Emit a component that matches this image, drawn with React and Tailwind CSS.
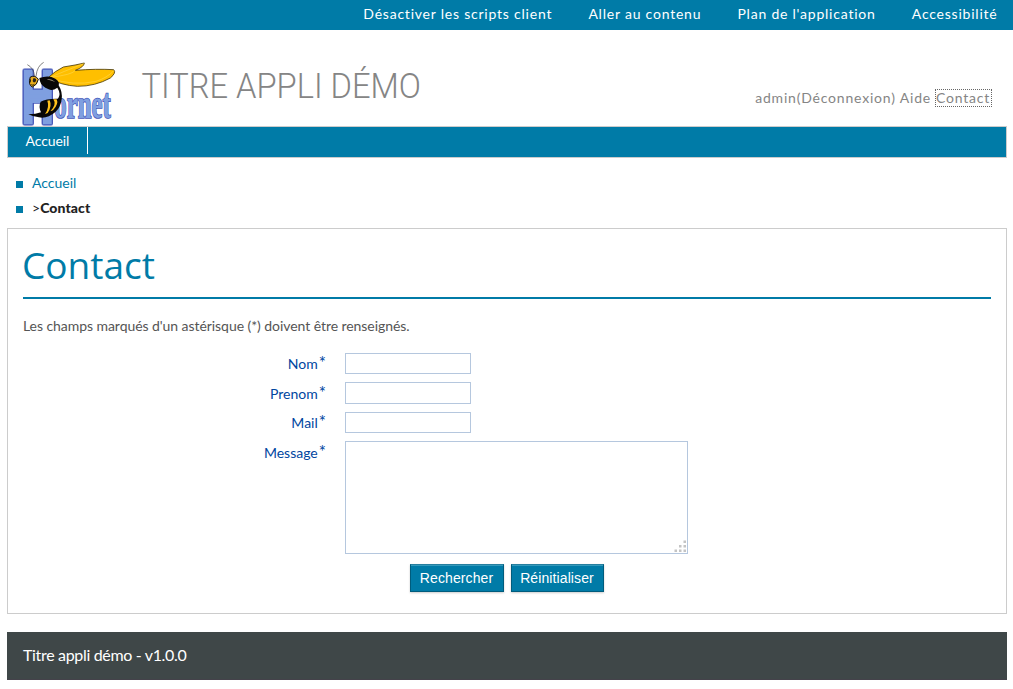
const topLinks = ["Désactiver les scripts client", "Aller au contenu", "Plan de l'application", "Accessibilité"];

function HornetLogo() {
  return (
    <svg className="block h-[67px] w-[96px] shrink-0 overflow-visible" viewBox="66 30 288 201" role="img" aria-label="Hornet">
      <g className="[filter:drop-shadow(2px_0_0_#4455b8)_drop-shadow(-2px_0_0_#4455b8)_drop-shadow(0_2px_0_#4455b8)_drop-shadow(0_-2px_0_#4455b8)]">
        <text transform="translate(67 217) scale(1 1.7)" fontSize="129" fontWeight="bold" fontFamily="Liberation Sans, sans-serif" fill="#7f9fe0" stroke="#7f9fe0" strokeWidth="8">H</text>
      </g>
      <text transform="translate(163 205) scale(1 1.95)" fontSize="66" fontWeight="bold" fontFamily="Liberation Serif, serif" fill="#7f9fe0" stroke="#4455b8" strokeWidth="2.6" paintOrder="stroke" textLength="169" lengthAdjust="spacingAndGlyphs">ornet</text>
      <path d="M104 80Q101 53 82 44M108 79Q111 48 131 37" fill="none" stroke="#444" strokeWidth="2" />
      <path d="M143 84Q165 63 190 51Q229 45 253 39Q252 51 226 61Q290 56 341 59Q350 68 331 84Q286 109 232 109Q184 106 143 84Z" fill="#ffbf00" stroke="#4b3b08" strokeWidth="2.5" />
      <path d="M151 82Q187 66 251 41M151 82Q218 74 226 61M151 85Q220 109 288 94Q321 84 341 62" fill="none" stroke="#ffdf60" strokeWidth="1.5" />
      <path d="M118 84Q146 74 166 86Q180 95 176 106Q188 126 185 148Q181 174 167 185Q142 207 117 202Q101 201 85 193Q108 193 123 187Q115 169 122 155Q139 145 174 146Q184 132 172 113Q158 123 146 118Q124 109 120 94Z" fill="#080808" />
      <path d="M142 152Q149 172 135 192L143 189Q157 168 149 151ZM160 148Q171 163 151 184L159 181Q177 162 170 148Z" fill="#ffc21c" />
      <path d="M140 88Q153 85 166 96L157 93Z" fill="#98907a" />
      <path d="M91 81Q106 74 115 88Q112 105 97 111Q83 104 91 81Z" fill="#e9ad1c" stroke="#111" strokeWidth="3" />
      <path d="M100 85Q110 82 108 94Q101 101 98 93ZM90 87Q95 88 92 97L87 100Z" fill="#28221a" />
      <path d="M94 104Q99 108 103 103" fill="none" stroke="#332500" strokeWidth="3" />
    </svg>
  );
}

function Field({ label, height, pad = "pt-[2px]", children }) {
  return (
    <div className={`flex ${height}`}>
      <label className={`mr-[19px] flex w-[319px] justify-end text-[14px] leading-[20px] text-[#0046a0] ${pad}`}>
        {label}<span className="ml-px text-[17px] leading-[17px]">*</span>
      </label>
      {children}
    </div>
  );
}

export default function App() {
  return (
    <div className="h-[689px] overflow-hidden bg-white font-[Lato,sans-serif]">
      <nav className="flex h-[30px] justify-end gap-[36.2px] bg-[#007ba7] pr-[15.5px] text-[14px] leading-[28px] tracking-[0.78px] text-white">
        {topLinks.map((link) => <a key={link}>{link}</a>)}
      </nav>

      <header className="flex h-[96px] pr-[21px] pl-[22px] pt-[30px]">
        <HornetLogo />
        <div className="ml-[22px] pt-[5px]">
          <svg className="block h-[44px] w-[290px] overflow-visible" viewBox="0 0 290 44">
            <text x="1.5" y="33" fontSize="34.5" fontWeight="300" fill="#858585" fontFamily="Roboto, sans-serif" textLength="279.5" lengthAdjust="spacingAndGlyphs">TITRE APPLI DÉMO</text>
          </svg>
        </div>
        <div className="ml-auto flex gap-[4px] pt-[29px] text-[14px] leading-[18px] tracking-[0.8px] text-[#858585]">
          <span>admin(Déconnexion)</span>
          <span>Aide</span>
          <span className="h-[18px] w-[57px] border border-dotted border-[#666] leading-[16px]">Contact</span>
        </div>
      </header>

      <nav className="mr-[6px] ml-[7px] flex h-[32px] border border-[#ccc] bg-[#007ba7] text-[14px] tracking-[-0.1px] text-white">
        <a className="h-[27px] w-[80px] border-r border-white pl-[17.5px] leading-[28px]">Accueil</a>
      </nav>

      <ul className="ml-[16px] h-[70px] pt-[13px] text-[14px] leading-[24px] text-[#007ba7]">
        <li className="flex h-[25px]"><span className="mt-[10px] mr-[9px] size-[7px] bg-[#007ba7]" />Accueil</li>
        <li className="flex h-[25px] text-[#222]"><span className="mt-[10px] mr-[9px] size-[7px] bg-[#007ba7]" />&gt;<b className="font-black tracking-[0.1px]">Contact</b></li>
      </ul>

      <main className="mr-[6px] ml-[7px] h-[386px] border border-[#ccc] px-[15px]">
        <h1 className="h-[70px] border-b-2 border-[#007ba7] pt-[11px]">
          <svg className="block h-[52px] w-[140px] overflow-visible" viewBox="0 0 140 52">
            <text x="-1" y="39" fontSize="37" fill="#007ba7" fontFamily="Open Sans, sans-serif" textLength="133" lengthAdjust="spacingAndGlyphs">Contact</text>
          </svg>
        </h1>
        <p className="mt-[17px] text-[14px] leading-[20px] tracking-[-0.06px] text-[#555]">Les champs marqués d'un astérisque (*) doivent être renseignés.</p>
        <form className="mt-[17px]">
          <div className="-ml-[16px]">
            <Field label="Nom" height="h-[29px]" pad="pt-px"><input aria-label="Nom" className="h-[21px] w-[126px] border border-[#b5c7de]" /></Field>
            <Field label="Prenom" height="h-[30px]"><input aria-label="Prenom" className="h-[22px] w-[126px] border border-[#b5c7de]" /></Field>
            <Field label="Mail" height="h-[29px]" pad="pt-px"><input aria-label="Mail" className="h-[21px] w-[126px] border border-[#b5c7de]" /></Field>
            <Field label="Message" height="h-[113px]">
              <div className="flex h-[113px] w-[343px] items-end justify-end border border-[#b5c7de] pr-px pb-px">
                <svg className="size-[12px]" viewBox="0 0 12 12" fill="#c4c4c4">
                  <path d="M9.500 .5h2.500v2.500h-2.500zM9.500 5h2.500v2.500h-2.500zM5 5h2.500v2.500h-2.500zM.5 9.500h2.500v2.500h-2.500zM5 9.500h2.500v2.500h-2.500zM9.500 9.500h2.500v2.500h-2.500z" />
                </svg>
              </div>
            </Field>
          </div>
          <div className="mr-px mt-[10px] flex justify-center gap-[7px] font-['Liberation_Sans',sans-serif] text-[14px] text-white">
            <button type="button" className="h-[28px] w-[94px] border border-[#005c7d] border-t-[#267f9f] bg-[#007ba7] tracking-[0.1px] shadow-[inset_0_1px_0_#3499bb,0_1px_2px_#ccc]">Rechercher</button>
            <button type="button" className="h-[28px] w-[93px] border border-[#005c7d] border-t-[#267f9f] bg-[#007ba7] tracking-[0.1px] shadow-[inset_0_1px_0_#3499bb,0_1px_2px_#ccc]">Réinitialiser</button>
          </div>
        </form>
      </main>

      <footer className="mr-[6px] ml-[7px] mt-[18px] h-[48px] border-b border-[#44424a] bg-[#3f4748] pl-[16px] text-[16px] leading-[46px] tracking-[-0.33px] text-white">Titre appli démo - v1.0.0</footer>
    </div>
  );
}
